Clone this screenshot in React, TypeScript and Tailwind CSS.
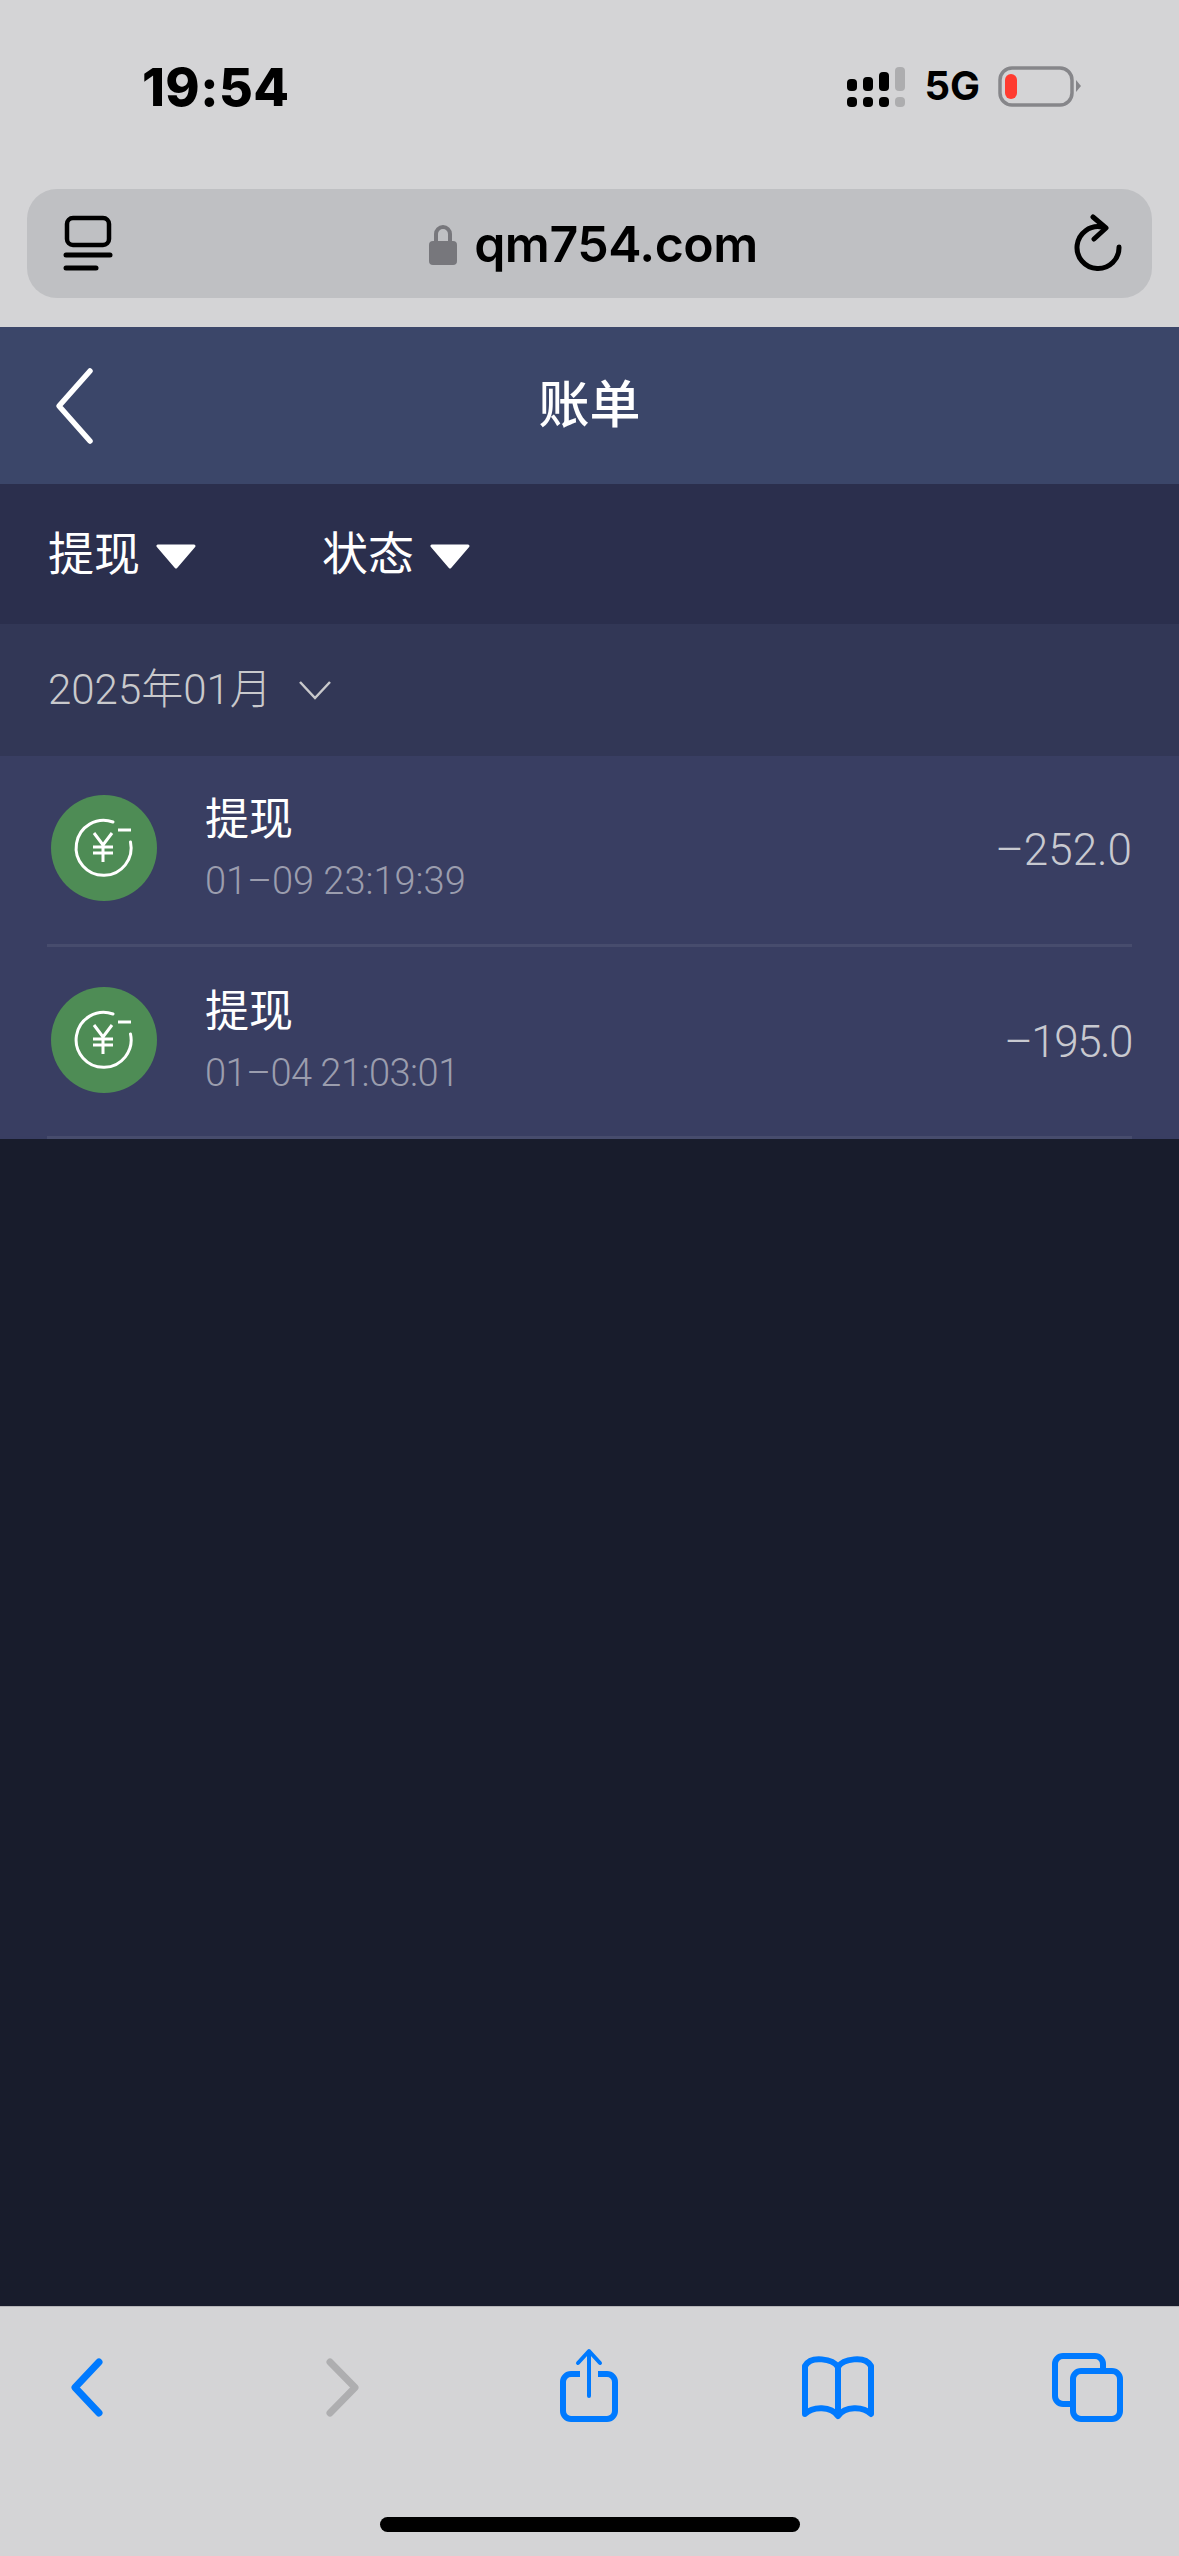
const cjk = "font-['Roboto','Noto_Sans_CJK_SC',sans-serif]";

function CoinIcon() {
  return (
    <svg width="106" height="106" viewBox="0 0 106 106" className="shrink-0" fill="none">
      <circle cx="53" cy="53" r="53" fill="#4e8c55" />
      <path d="M62 27A27.5 27.5 0 1 0 79.5 47" stroke="#fff" strokeWidth="3" strokeLinecap="round" />
      <path d="M67 35H80" stroke="#fff" strokeWidth="3" />
      <path d="M43 38L52 50L61 38M42 52H62M42 58H62M52 50V67" stroke="#fff" strokeWidth="3" />
    </svg>
  );
}

function Row({ time, amount, size, timeTrack, amountTrack }: { time: string; amount: string; size: string; timeTrack: string; amountTrack: string }) {
  return (
    <div className={`mx-[47px] flex border-b-[3px] border-[#474c6d] ${size}`}>
      <div className="ml-[4px] mt-[39px]"><CoinIcon /></div>
      <div className="ml-[48px] mt-[39px] flex flex-col">
        <span className={`${cjk} text-[44px] leading-[50px] text-white`}>提现</span>
        <span className={`${cjk} mt-[13px] text-[38px] leading-[46px] text-[#9b9dae] font-light whitespace-pre ${timeTrack}`}>{time}</span>
      </div>
      <span className={`${cjk} ml-auto mt-[64px] text-[44px] leading-[60px] text-[#c8c9d0] font-light ${amountTrack}`}>{amount}</span>
    </div>
  );
}

function Triangle() {
  return (
    <svg width="42" height="26" viewBox="0 0 42 26" className="ml-[15px] mt-[4px]">
      <path d="M3 3H39L21 24Z" fill="#fff" stroke="#fff" strokeWidth="3" strokeLinejoin="round" />
    </svg>
  );
}

export default function App() {
  return (
    <div className="w-[1179px] h-[2556px] flex flex-col bg-[#181c2c] overflow-hidden font-['Inter',sans-serif]">
      <div className="h-[327px] bg-[#d4d4d6] flex flex-col">
        <div className="h-[189px] flex items-start">
          <span className="ml-[142px] mt-[58px] text-[52px] leading-[60px] font-extrabold text-black tracking-[0.4px]">19:54</span>
          <div className="ml-auto mr-[98px] mt-[64px] flex items-center">
            <svg width="60" height="44" viewBox="0 0 60 44" fill="none">
              <rect x="0" y="15" width="10" height="12" rx="4" fill="#000" />
              <rect x="16" y="13" width="10" height="14" rx="4" fill="#000" />
              <rect x="32" y="8" width="10" height="19" rx="4" fill="#000" />
              <rect x="48" y="3" width="10" height="24" rx="4" fill="#adadaf" />
              <rect x="0" y="33" width="10" height="10" rx="4" fill="#000" />
              <rect x="16" y="33" width="10" height="10" rx="4" fill="#000" />
              <rect x="32" y="33" width="10" height="10" rx="4" fill="#000" />
              <rect x="48" y="33" width="10" height="10" rx="4" fill="#adadaf" />
            </svg>
            <span className="ml-[17px] text-[40px] leading-[44px] font-bold text-black">5G</span>
            <svg width="84" height="44" viewBox="0 0 84 44" className="ml-[17px]" fill="none">
              <rect x="3" y="4" width="72" height="37" rx="12" stroke="#86868a" strokeWidth="3.5" />
              <rect x="8" y="10" width="12" height="25" rx="6" fill="#ff3b30" />
              <path d="M79 16L84 22L79 28Z" fill="#86868a" />
            </svg>
          </div>
        </div>
        <div className="mx-[27px] h-[109px] rounded-[30px] bg-[#bfc0c3] flex items-center relative">
          <svg width="50" height="58" viewBox="0 0 50 58" className="ml-[36px]" fill="none">
            <rect x="4" y="3" width="42" height="27" rx="6" stroke="#000" strokeWidth="4.5" />
            <path d="M3 40H47" stroke="#000" strokeWidth="5" strokeLinecap="round" />
            <path d="M3 53H33" stroke="#000" strokeWidth="5" strokeLinecap="round" />
          </svg>
          <div className="flex-1 flex items-center justify-center">
            <svg width="30" height="42" viewBox="0 0 30 42" fill="none">
              <path d="M8 20V11a7 7 0 0 1 14 0V20" stroke="#77777c" strokeWidth="4" />
              <rect x="1" y="18" width="28" height="24" rx="4" fill="#77777c" />
            </svg>
            <span className="ml-[16px] text-[50px] leading-[64px] font-semibold text-black tracking-[-0.5px]">qm754.com</span>
          </div>
          <svg width="50" height="60" viewBox="0 0 50 60" className="mr-[29px]" fill="none">
            <path d="M29 13A21 21 0 1 0 46 33" stroke="#000" strokeWidth="5" strokeLinecap="round" />
            <path d="M20 3L33 14L21 25" stroke="#000" strokeWidth="5" strokeLinecap="round" strokeLinejoin="round" />
          </svg>
        </div>
      </div>

      <div className="h-[157px] bg-[#3b4669] flex items-center relative">
        <svg width="44" height="80" viewBox="0 0 44 80" className="ml-[53px]" fill="none">
          <path d="M37 5L6 40L37 75" stroke="#fff" strokeWidth="5.5" strokeLinecap="round" strokeLinejoin="round" />
        </svg>
        <span className={`${cjk} absolute left-0 right-0 text-center text-[51px] leading-[60px] text-white font-medium`}>账单</span>
      </div>

      <div className="h-[140px] bg-[#2b2f4d] flex items-center pl-[48px]">
        <span className={`${cjk} text-[46px] leading-[56px] text-white`}>提现</span>
        <Triangle />
        <span className={`${cjk} ml-[125px] text-[46px] leading-[56px] text-white`}>状态</span>
        <Triangle />
      </div>

      <div className="h-[132px] bg-[#323756] flex items-center pl-[48px]">
        <span className={`${cjk} text-[42px] leading-[50px] text-[#c9c9cc] font-light`}>2025年01月</span>
        <svg width="34" height="20" viewBox="0 0 34 20" className="ml-[26px]" fill="none">
          <path d="M2 2L17 18L32 2" stroke="#c9c9cc" strokeWidth="2.5" />
        </svg>
      </div>

      <div className="h-[383px] bg-[#393e62]">
        <Row size="h-[191px]" time="01–09 23:19:39" amount="–252.0" timeTrack="tracking-[0px]" amountTrack="tracking-[0px]" />
        <Row size="h-[192px] pt-px" time="01–04 21:03:01" amount="–195.0" timeTrack="tracking-[-0.5px]" amountTrack="tracking-[-1.5px]" />
      </div>

      <div className="flex-1" />

      <div className="h-[250px] bg-[#d4d4d6] border-t border-[#b5b5b8] flex flex-col">
        <div className="mt-[39px] pl-[47px] pr-[52px] flex justify-between">
          <svg width="80" height="80" viewBox="0 0 80 80" fill="none">
            <path d="M52 16L28 41.5L52 67" stroke="#007aff" strokeWidth="7" strokeLinecap="round" strokeLinejoin="round" />
          </svg>
          <svg width="80" height="80" viewBox="0 0 80 80" fill="none">
            <path d="M33 16L58 41.5L33 67" stroke="#aeaeb0" strokeWidth="7" strokeLinecap="round" strokeLinejoin="round" />
          </svg>
          <svg width="80" height="80" viewBox="0 0 80 80" fill="none">
            <path d="M33 28H24a8 8 0 0 0-8 8V65a8 8 0 0 0 8 8H60a8 8 0 0 0 8-8V36a8 8 0 0 0-8-8H51" stroke="#007aff" strokeWidth="6" />
            <path d="M42 6V50M31 17L42 5L53 17" stroke="#007aff" strokeWidth="4" strokeLinecap="round" strokeLinejoin="round" />
          </svg>
          <svg width="80" height="80" viewBox="0 0 80 80" fill="none">
            <path d="M41 21C36 13 14 9 8 20V68C16 60 34 60 41 70C48 60 66 60 74 68V20C68 9 46 13 41 21ZM41 21V70" stroke="#007aff" strokeWidth="6" strokeLinejoin="round" />
          </svg>
          <svg width="80" height="80" viewBox="0 0 80 80" fill="none">
            <path d="M56 22V18a8 8 0 0 0-8-8H16a8 8 0 0 0-8 8V50a8 8 0 0 0 8 8H24" stroke="#007aff" strokeWidth="6" />
            <rect x="26" y="25" width="47" height="48" rx="8" stroke="#007aff" strokeWidth="6" />
          </svg>
        </div>
        <div className="mt-[91px] mx-auto w-[420px] h-[15px] rounded-full bg-black" />
      </div>
    </div>
  );
}
